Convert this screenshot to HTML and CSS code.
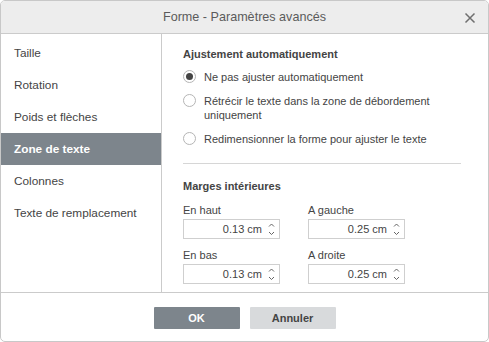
FILE: index.html
```html
<!DOCTYPE html>
<html lang="fr">
<head>
<meta charset="utf-8">
<title>Forme - Paramètres avancés</title>
<link rel="stylesheet" href="styles.css">
</head>
<body>
<div class="dialog">
  <div class="header">
    <span class="title">Forme - Paramètres avancés</span>
    <svg class="close" width="12" height="12" viewBox="0 0 12 12"><path d="M1.5 1.5 L10.5 10.5 M10.5 1.5 L1.5 10.5" stroke="#6f6f6f" stroke-width="1.5" fill="none"/></svg>
  </div>
  <div class="body">
    <ul class="menu">
      <li class="item">Taille</li>
      <li class="item">Rotation</li>
      <li class="item">Poids et flèches</li>
      <li class="item active">Zone de texte</li>
      <li class="item">Colonnes</li>
      <li class="item">Texte de remplacement</li>
    </ul>
    <div class="content">
      <div class="heading">Ajustement automatiquement</div>
      <div class="radio-row first">
        <span class="radio checked"></span>
        <span class="radio-label">Ne pas ajuster automatiquement</span>
      </div>
      <div class="radio-row">
        <span class="radio"></span>
        <span class="radio-label">Rétrécir le texte dans la zone de débordement uniquement</span>
      </div>
      <div class="radio-row">
        <span class="radio"></span>
        <span class="radio-label">Redimensionner la forme pour ajuster le texte</span>
      </div>
      <div class="separator"></div>
      <div class="heading margins">Marges intérieures</div>
      <div class="fields">
        <div class="field">
          <div class="label">En haut</div>
          <div class="spin"><span class="value">0.13 cm</span><span class="arrows"><svg width="7" height="16" viewBox="0 0 7 16"><path d="M1 5.5 L3.5 3 L6 5.5 M1 11 L3.5 13.5 L6 11" stroke="#555" stroke-width="0.9" fill="none"/></svg></span></div>
        </div>
        <div class="field">
          <div class="label">A gauche</div>
          <div class="spin"><span class="value">0.25 cm</span><span class="arrows"><svg width="7" height="16" viewBox="0 0 7 16"><path d="M1 5.5 L3.5 3 L6 5.5 M1 11 L3.5 13.5 L6 11" stroke="#555" stroke-width="0.9" fill="none"/></svg></span></div>
        </div>
        <div class="field">
          <div class="label">En bas</div>
          <div class="spin"><span class="value">0.13 cm</span><span class="arrows"><svg width="7" height="16" viewBox="0 0 7 16"><path d="M1 5.5 L3.5 3 L6 5.5 M1 11 L3.5 13.5 L6 11" stroke="#555" stroke-width="0.9" fill="none"/></svg></span></div>
        </div>
        <div class="field">
          <div class="label">A droite</div>
          <div class="spin"><span class="value">0.25 cm</span><span class="arrows"><svg width="7" height="16" viewBox="0 0 7 16"><path d="M1 5.5 L3.5 3 L6 5.5 M1 11 L3.5 13.5 L6 11" stroke="#555" stroke-width="0.9" fill="none"/></svg></span></div>
        </div>
      </div>
    </div>
  </div>
  <div class="footer">
    <button class="btn primary">OK</button>
    <button class="btn secondary">Annuler</button>
  </div>
</div>
</body>
</html>
```

FILE: styles.css
```css
html, body {
  margin: 0;
  padding: 0;
  background: #ffffff;
}

body {
  font-family: "Liberation Sans", Arial, sans-serif;
  font-size: 11px;
  color: #444444;
}

.dialog {
  width: 489px;
  height: 342px;
  box-sizing: border-box;
  border: 1px solid #c8c8c8;
  border-radius: 5px;
  overflow: hidden;
  display: flex;
  flex-direction: column;
  background: #ffffff;
}

.header {
  height: 32px;
  flex: none;
  background: #ededed;
  border-bottom: 1px solid #cbcbcb;
  display: flex;
  align-items: center;
  justify-content: center;
  position: relative;
}

.title {
  font-size: 12.6px;
  color: #5b5b5b;
}

.close {
  position: absolute;
  right: 12px;
  top: 11px;
}

.body {
  flex: none;
  height: 258px;
  display: flex;
}

.menu {
  list-style: none;
  margin: 0;
  padding: 3px 0 0 0;
  width: 160px;
  flex: none;
  border-right: 1px solid #cbcbcb;
  font-size: 11.8px;
}

.item {
  height: 32px;
  line-height: 32px;
  padding-left: 13px;
  color: #444444;
}

.item.active {
  background: #7d858c;
  color: #ffffff;
  font-weight: bold;
}

.content {
  flex: 1;
  padding: 13px 27px 0 21px;
}

.heading {
  font-weight: bold;
  line-height: 14px;
  color: #444444;
}

.radio-row {
  display: flex;
  align-items: flex-start;
  margin-top: 10px;
  line-height: 14px;
}

.radio-row.first {
  margin-top: 9px;
}

.radio {
  flex: none;
  border: 1px solid #b5b5b5;
  border-radius: 50%;
  margin: 0 8px 0 0;
  box-sizing: border-box;
  width: 13px;
  height: 13px;
  display: flex;
  align-items: center;
  justify-content: center;
}

.radio.checked::after {
  content: "";
  width: 7px;
  height: 7px;
  border-radius: 50%;
  background: #444444;
}

.separator {
  height: 1px;
  background: #d6d6d6;
  margin-top: 17px;
}

.heading.margins {
  margin-top: 15px;
}

.fields {
  display: grid;
  grid-template-columns: 97px 97px;
  column-gap: 28px;
  row-gap: 9px;
  margin-top: 10px;
}

.label {
  line-height: 14px;
  margin-bottom: 2px;
}

.spin {
  height: 20px;
  box-sizing: border-box;
  border: 1px solid #cfcfcf;
  display: flex;
  align-items: center;
  justify-content: flex-end;
  padding-right: 4px;
}

.value {
  margin-right: 6px;
  color: #444444;
}

.arrows {
  display: flex;
  align-items: center;
}

.footer {
  flex: 1;
  border-top: 1px solid #cbcbcb;
  display: flex;
  justify-content: center;
  align-items: flex-start;
  gap: 10px;
  padding-top: 14px;
}

.btn {
  width: 86px;
  height: 22px;
  border: none;
  border-radius: 1px;
  font-family: "Liberation Sans", Arial, sans-serif;
  font-size: 11px;
  font-weight: bold;
  padding: 0;
}

.btn.primary {
  background: #7d858c;
  color: #ffffff;
}

.btn.secondary {
  background: #d8dadc;
  color: #444444;
}
```
